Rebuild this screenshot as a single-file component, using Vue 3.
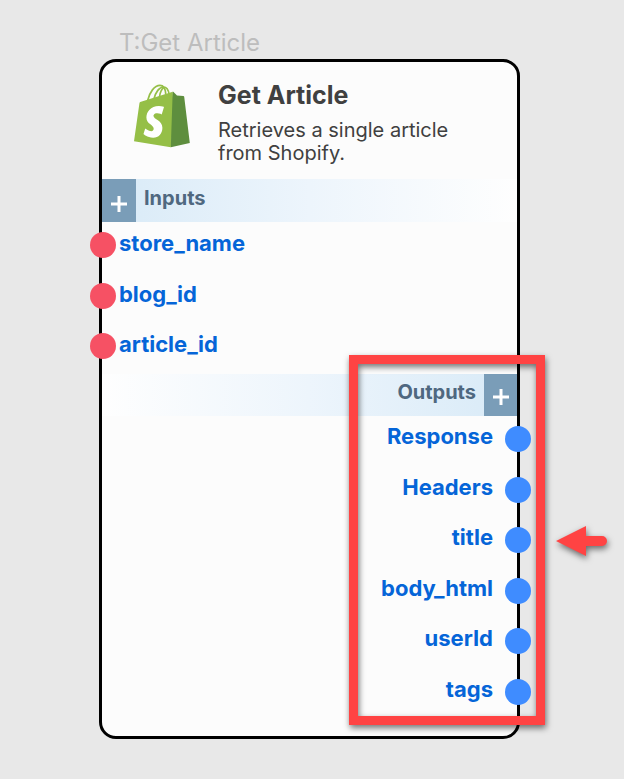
<script setup>
const inputs = ['store_name', 'blog_id', 'article_id']
const outputs = ['Response', 'Headers', 'title', 'body_html', 'userId', 'tags']
</script>

<template>
  <main class="canvas">
    <p class="node-name">T:Get Article</p>
    <article class="node">
      <header class="head">
        <svg class="logo" viewBox="0 0 56 64" role="img" aria-label="Shopify">
          <g fill="none" stroke="#95bf47" stroke-width="1.7">
            <path d="M13.500 17C15.500 8 20.500 1.500 26 1.400c3.500 0 5.500 3.500 5.800 9" />
            <path d="M20 15C21.500 8 25.500 3 29.500 3c3 0 5 3 5.600 7.500" />
            <path d="M25.500 13c.5-4.500 2-8 4.500-9.500" />
          </g>
          <path fill="#95bf47" d="M7 17.800L38.700 7.800 40 34 36.800 63.300 0 57.300 5.400 19.500c.2-1.100.6-1.400 1.600-1.700z" />
          <path fill="#5e8e3e" d="M38.700 7.800h.6l3.700 3.700 6.300.4c.6 0 .8.3.9.8l5.600 46.300-19 4.300z" />
          <path fill="#fff" d="M30 23l-2.300 7.400s-2-1.200-4.500-1.200c-3.500 0-3.700 2.200-3.700 2.800 0 3.200 8.900 4.300 8.900 11.700 0 6-3.800 10-9.200 10-6.200 0-9.700-3.700-9.700-3.700l1.700-5.500s3.300 2.700 6 2.700c1.800 0 2.500-1.400 2.500-2.400 0-4.200-7.300-4.400-7.300-11.200 0-5.800 4.200-11.600 12.500-11.600 3.300 0 5.100 1 5.100 1z" />
        </svg>
        <div class="intro">
          <h1>Get Article</h1>
          <p>Retrieves a single article from Shopify.</p>
        </div>
      </header>

      <section class="inputs">
        <div class="band">
          <button class="add" type="button" aria-label="Add input">
            <svg viewBox="0 0 18 18" aria-hidden="true"><path d="M9 1v16M1 9h16" /></svg>
          </button>
          <h2>Inputs</h2>
        </div>
        <ul class="ports">
          <li v-for="name in inputs" :key="name"><i class="dot"></i><span>{{ name }}</span></li>
        </ul>
      </section>

      <section class="outputs">
        <div class="band">
          <button class="add" type="button" aria-label="Add output">
            <svg viewBox="0 0 18 18" aria-hidden="true"><path d="M9 1v16M1 9h16" /></svg>
          </button>
          <h2>Outputs</h2>
        </div>
        <ul class="ports">
          <li v-for="name in outputs" :key="name"><i class="dot"></i><span>{{ name }}</span></li>
        </ul>
        <div class="highlight"></div>
        <svg class="arrow" viewBox="0 0 52 32" aria-hidden="true">
          <path d="M0 16L30 1v10h16a5 5 0 0 1 0 10H30v10z" />
        </svg>
      </section>
    </article>
  </main>
</template>

<style>
body {
  margin: 0;
  background: #e8e8e8;
}
</style>

<style scoped>
.canvas {
  box-sizing: border-box;
  min-height: 100vh;
  padding: 27px 104px 40px 99px;
  background: #e8e8e8;
  font-family: Inter, "Liberation Sans", sans-serif;
}
h1, h2, p, ul {
  margin: 0;
  padding: 0;
}
.node-name {
  padding-left: 20px;
  font-size: 24px;
  line-height: 32px;
  color: #bdbdbd;
}
.node {
  border: 3px solid #000;
  border-radius: 17px;
  background: #fcfcfc;
  padding-bottom: 17px;
}
.head {
  display: flex;
  gap: 28px;
  box-sizing: border-box;
  min-height: 117px;
  padding: 18px 32px 12px;
}
.logo {
  flex: none;
  width: 56px;
  height: 64px;
  margin-top: 4px;
}
.intro {
  max-width: 260px;
  color: #404040;
}
h1 {
  font-size: 25px;
  line-height: 30px;
  font-weight: 700;
}
.intro p {
  margin-top: 9px;
  font-size: 20px;
  line-height: 23px;
}
.band {
  display: flex;
  height: 43px;
  background: linear-gradient(90deg, #d8eaf7, #edf5fc 50%, #fefefe);
}
.add {
  display: grid;
  place-items: center;
  width: 34px;
  padding: 6px 0 0;
  border: 0;
  background: #7a9db8;
}
.add svg {
  width: 18px;
  height: 18px;
  fill: none;
  stroke: #fff;
  stroke-width: 3;
}
h2 {
  padding: 0 8px;
  font-size: 20px;
  line-height: 38px;
  font-weight: 700;
  color: #4f6880;
}
.ports {
  display: grid;
  grid-auto-rows: 1fr;
  height: 152px;
  list-style: none;
}
.ports li {
  display: flex;
  align-items: flex-start;
  gap: 3px;
  padding-top: 10px;
  margin-left: -12px;
  font-size: 22px;
  line-height: 22px;
  font-weight: 700;
  color: #0565d8;
}
.dot {
  flex: none;
  width: 26px;
  height: 26px;
  border-radius: 50%;
  background: #f65164;
}
.outputs {
  position: relative;
}
.outputs .band {
  flex-direction: row-reverse;
  height: 42px;
  background: linear-gradient(270deg, #d8eaf7, #edf5fc 50%, #fefefe);
}
.outputs .add {
  width: 33px;
  padding-top: 4px;
}
.outputs h2 {
  line-height: 36px;
}
.outputs .ports {
  height: 303px;
}
.outputs li {
  flex-direction: row-reverse;
  gap: 12px;
  margin: 0 -14px 0 0;
  line-height: 20px;
}
.outputs .dot {
  background: #3f8cff;
}
.highlight {
  position: absolute;
  top: -19px;
  right: -28px;
  bottom: -6px;
  box-sizing: border-box;
  width: 196px;
  border: 9px solid #ff4343;
  filter: drop-shadow(1px 3px 3px rgba(0, 0, 0, 0.55));
  pointer-events: none;
}
.arrow {
  position: absolute;
  top: 151px;
  right: -91px;
  width: 52px;
  height: 32px;
  overflow: visible;
  fill: #ff4343;
  filter: drop-shadow(1px 3px 3px rgba(0, 0, 0, 0.55));
}
</style>
